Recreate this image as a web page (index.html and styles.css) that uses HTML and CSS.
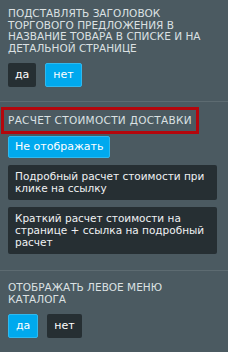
FILE: index.html
```html
<!DOCTYPE html>
<html lang="ru">
<head>
<meta charset="utf-8">
<link rel="stylesheet" href="styles.css">
</head>
<body>
<div class="panel">
  <div class="section s1">
    <div class="title">ПОДСТАВЛЯТЬ ЗАГОЛОВОК ТОРГОВОГО ПРЕДЛОЖЕНИЯ В НАЗВАНИЕ ТОВАРА В СПИСКЕ И НА ДЕТАЛЬНОЙ СТРАНИЦЕ</div>
    <div class="btns">
      <span class="btn dark">да</span>
      <span class="btn blue">нет</span>
    </div>
  </div>
  <div class="section s2">
    <div class="title hl">РАСЧЕТ СТОИМОСТИ ДОСТАВКИ</div>
    <div class="opts">
      <span class="btn blue wide">Не отображать</span>
      <div class="opt">Подробный расчет стоимости при клике на ссылку</div>
      <div class="opt">Краткий расчет стоимости на странице + ссылка на подробный расчет</div>
    </div>
  </div>
  <div class="section s3">
    <div class="title">ОТОБРАЖАТЬ ЛЕВОЕ МЕНЮ КАТАЛОГА</div>
    <div class="btns">
      <span class="btn blue">да</span>
      <span class="btn dark">нет</span>
    </div>
  </div>
</div>
</body>
</html>
```
FILE: styles.css
```css
html, body {
  margin: 0;
  padding: 0;
  background: #4b5a61;
}
body {
  width: 228px;
  height: 352px;
  overflow: hidden;
  font-family: "DejaVu Sans", "Open Sans", sans-serif;
  color: #dde2e4;
}
.panel {
  display: flex;
  flex-direction: column;
}
.section {
  display: flex;
  flex-direction: column;
  padding: 0 11px 0 8px;
  border-bottom: 1px solid #5d6b71;
}
.s1 {
  padding-top: 8px;
  padding-bottom: 14px;
}
.s2 {
  padding-top: 5px;
  padding-bottom: 16px;
}
.s3 {
  padding-top: 11px;
  border-bottom: none;
}
.title {
  font-size: 10.5px;
  line-height: 11.7px;
  text-transform: uppercase;
  color: #dce1e3;
}
.hl {
  align-self: flex-start;
  margin-left: -7px;
  padding: 3px 4px;
  border: 3px solid #b4060c;
  line-height: 15px;
  letter-spacing: 0.3px;
}
.btns {
  display: flex;
  gap: 9px;
  margin-top: 8px;
}
.btn {
  display: inline-flex;
  align-items: center;
  justify-content: center;
  height: 24px;
  padding: 0 7px;
  font-size: 11px;
  color: #ffffff;
  border-radius: 2px;
  box-sizing: border-box;
}
.dark {
  background: #262f33;
}
.blue {
  background: #00a9ee;
  border: 1px solid #2fb9ef;
}
.opts {
  display: flex;
  flex-direction: column;
  align-items: flex-start;
  gap: 7px;
  margin-top: 2px;
}
.wide {
  height: 22px;
  padding: 0 6px;
}
.opt {
  align-self: stretch;
  background: #262f33;
  color: #f0f2f3;
  font-size: 10.5px;
  line-height: 11.7px;
  padding: 6px 7px;
  border-radius: 2px;
}
```
